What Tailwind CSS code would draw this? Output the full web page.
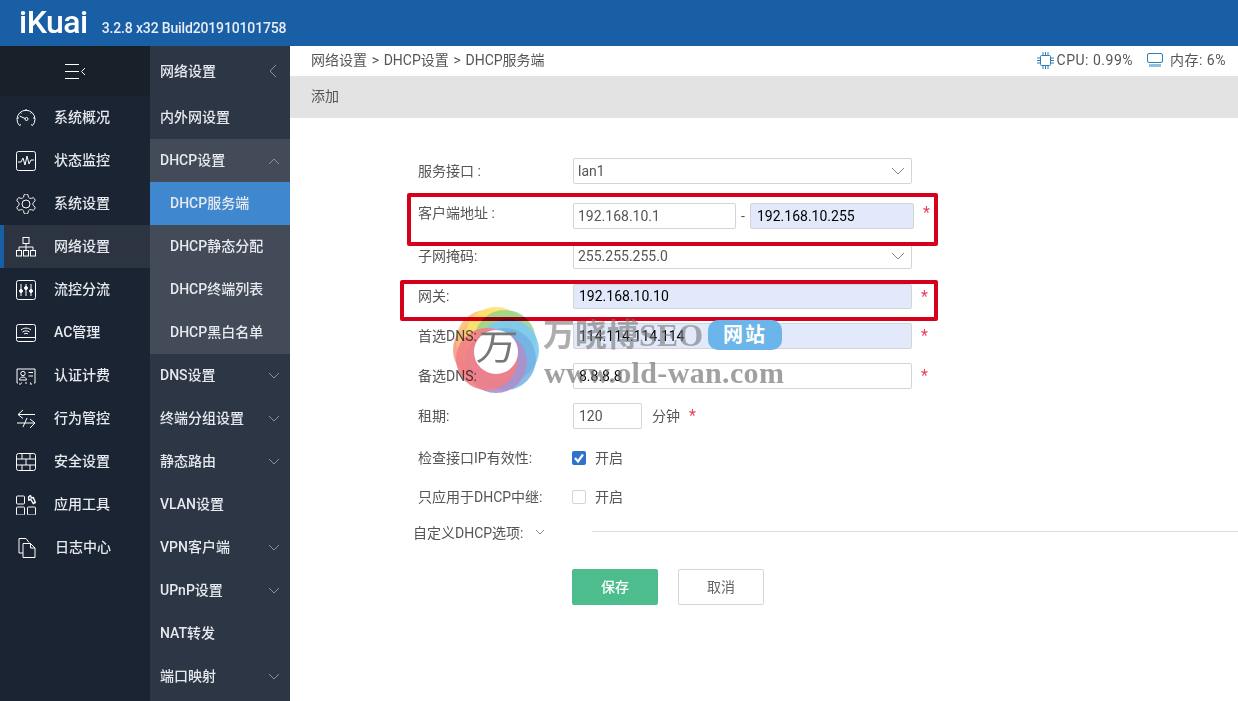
<!DOCTYPE html>
<html lang="zh-CN">
<head>
    <meta charset="UTF-8">
    <title>iKuai - DHCP服务端</title>
    <script src="https://cdn.jsdelivr.net/npm/@tailwindcss/browser@4"></script>
</head>
<body class="h-[701px] w-[1238px] overflow-hidden bg-white font-['Roboto','Noto_Sans_CJK_SC',sans-serif] text-[14px] text-[#555]">
    <!-- top bar -->
    <header class="flex h-[46px] items-center bg-[#195fa6] pl-[19px] text-white">
        <span class="mb-[3px] text-[32px] font-medium leading-none tracking-[-0.5px]">iKuai</span>
        <span class="ml-[14px] mt-[9px] text-[14px] font-medium leading-none tracking-[-0.15px] text-[#e8eef6]">3.2.8 x32 Build201910101758</span>
    </header>

    <div class="flex h-[655px]">
        <!-- main nav -->
        <nav class="w-[150px] shrink-0 bg-[#1b2433] font-medium text-[#e6e9ee]">
            <div class="flex h-[50px] items-center justify-center bg-[#182029]">
                <svg width="24" height="20" viewBox="0 0 24 20" fill="none" stroke="#fff" stroke-width="1"><path d="M2 3.500h14M2 10.500h14M2 17.500h14M22 7l-3.500 3.500L22 14"/></svg>
            </div>
            <a class="flex h-[43px] items-center pl-[16px]">
                <svg class="mr-[18px] w-[20px]" width="20" height="20" viewBox="0 0 20 20" fill="none" stroke="#fff" stroke-width="1"><path d="M3.500 17.500a9 9 0 1 1 13 0M3.500 17.500l1.500-1M16.500 17.500l-1.500-1M1 10h2M17 10h2M10 1v2M4 4l1.500 1.500M16 4l-1.500 1.500M3.500 8l5.500 2.500"/><circle cx="10.500" cy="11" r="1.500"/></svg>
                系统概况
            </a>
            <a class="flex h-[43px] items-center pl-[16px]">
                <svg class="mr-[18px] w-[20px]" width="20" height="20" viewBox="0 0 20 20" fill="none" stroke="#fff" stroke-width="1"><rect x="0.500" y="0.500" width="19" height="19" rx="2"/><path d="M2 11h3l2-4 2 7 2-9 2 8 2-4h3"/></svg>
                状态监控
            </a>
            <a class="flex h-[43px] items-center pl-[16px]">
                <svg class="mr-[18px] w-[20px]" width="20" height="20" viewBox="2 2 20 20" fill="none" stroke="#fff" stroke-width="1"><path d="M12.220 2h-.44a2 2 0 0 0-2 2v.18a2 2 0 0 1-1 1.730l-.43.25a2 2 0 0 1-2 0l-.15-.08a2 2 0 0 0-2.730.73l-.22.38a2 2 0 0 0 .73 2.730l.15.1a2 2 0 0 1 1 1.720v.51a2 2 0 0 1-1 1.740l-.15.09a2 2 0 0 0-.73 2.730l.22.38a2 2 0 0 0 2.730.73l.15-.08a2 2 0 0 1 2 0l.43.25a2 2 0 0 1 1 1.730V20a2 2 0 0 0 2 2h.44a2 2 0 0 0 2-2v-.18a2 2 0 0 1 1-1.730l.43-.25a2 2 0 0 1 2 0l.15.08a2 2 0 0 0 2.730-.73l.22-.39a2 2 0 0 0-.73-2.730l-.15-.08a2 2 0 0 1-1-1.740v-.5a2 2 0 0 1 1-1.740l.15-.09a2 2 0 0 0 .73-2.730l-.22-.38a2 2 0 0 0-2.730-.73l-.15.08a2 2 0 0 1-2 0l-.43-.25a2 2 0 0 1-1-1.730V4a2 2 0 0 0-2-2z"/><circle cx="12" cy="12" r="4"/></svg>
                系统设置
            </a>
            <a class="flex h-[43px] items-center border-l-[4px] border-[#195fa6] bg-[#2c3442] pl-[12px]">
                <svg class="mr-[18px] w-[20px]" width="20" height="20" viewBox="0 0 20 20" fill="none" stroke="#fff" stroke-width="1"><rect x="7" y="0.500" width="6" height="6"/><rect x="0.500" y="13.500" width="5" height="5.500"/><rect x="7.500" y="13.500" width="5" height="5.500"/><rect x="14.500" y="13.500" width="5" height="5.500"/><path d="M10 6.500v7M3 13.500V10h14v3.500"/></svg>
                网络设置
            </a>
            <a class="flex h-[43px] items-center pl-[16px]">
                <svg class="mr-[18px] w-[20px]" width="20" height="20" viewBox="0 0 20 20" fill="none" stroke="#fff" stroke-width="1"><rect x="0.500" y="0.500" width="19" height="19" rx="2"/><path d="M5 4v12M10 4v12M15 4v12"/><circle cx="5" cy="11" r="1.500" fill="#fff"/><circle cx="10" cy="8" r="1.500" fill="#fff"/><circle cx="15" cy="11" r="1.500" fill="#fff"/></svg>
                流控分流
            </a>
            <a class="flex h-[43px] items-center pl-[16px]">
                <svg class="mr-[18px] w-[20px]" width="20" height="20" viewBox="0 0 20 20" fill="none" stroke="#fff" stroke-width="1"><path d="M2.500 1.500h15a2 2 0 0 1 2 2v13a2 2 0 0 1-2 2h-15a2 2 0 0 1-2-2v-13a2 2 0 0 1 2-2zM.500 14.500h19M5 7c3-2.500 7-2.500 10 0M6.500 9c2-1.500 5-1.500 7 0M8 11c1-.8 3-.8 4 0"/></svg>
                AC管理
            </a>
            <a class="flex h-[43px] items-center pl-[16px]">
                <svg class="mr-[18px] w-[20px]" width="20" height="20" viewBox="0 0 20 20" fill="none" stroke="#fff" stroke-width="1"><path d="M1 17V3h18v14h-1M1 17h1M5 17h1M9 17h2M14 17h1M4 17v2M15 17v2"/><circle cx="7" cy="7.500" r="2.200"/><path d="M3.500 14c0-4 7-4 7 0zM12.500 6.500h4.500M12.500 10h4.500"/></svg>
                认证计费
            </a>
            <a class="flex h-[43px] items-center pl-[16px]">
                <svg class="mr-[18px] w-[20px]" width="20" height="20" viewBox="0 0 20 20" fill="none" stroke="#fff" stroke-width="1"><path d="M19 5.500H2M7 1L2 5.500 7 9.500M1 14h18M14 10l5 4-5 5M11 9l-4 9"/></svg>
                行为管控
            </a>
            <a class="flex h-[43px] items-center pl-[16px]">
                <svg class="mr-[18px] w-[20px]" width="20" height="20" viewBox="0 0 20 20" fill="none" stroke="#fff" stroke-width="1"><rect x="0.500" y="1.500" width="19" height="17" rx="2"/><path d="M.500 7h19M.500 13h19M6 1.500V7M14 1.500V7M10 7v6M6 13v5.500M14 13v5.500"/></svg>
                安全设置
            </a>
            <a class="flex h-[43px] items-center pl-[16px]">
                <svg class="mr-[18px] w-[20px]" width="20" height="20" viewBox="0 0 20 20" fill="none" stroke="#fff" stroke-width="1"><rect x="0.500" y="1" width="8" height="8" rx="1"/><rect x="0.500" y="12" width="8" height="8" rx="1"/><rect x="11.500" y="12" width="8" height="8" rx="1"/><path d="M12.500 2l2-1.500 .8 2.500 2-.500 2 5-2 1-2.500-4-2 .5z" stroke-width="1.400"/></svg>
                应用工具
            </a>
            <a class="flex h-[43px] items-center pl-[18px]">
                <svg class="mr-[17px] w-[20px]" width="20" height="20" viewBox="0 0 20 20" fill="none" stroke="#fff" stroke-width="1"><path d="M5 15H1V.500h7l3 4M5 5.500v14h12V10l-4.500-4.500H5M12.500 5.500V10H17"/></svg>
                日志中心
            </a>
        </nav>

        <!-- sub nav -->
        <nav class="w-[140px] shrink-0 overflow-hidden bg-[#2c3645] font-medium text-[#e6e9ee]">
            <a class="flex h-[50px] items-center justify-between pl-[10px] pr-[12px]">网络设置
                <svg width="10" height="14" viewBox="0 0 10 14" fill="none" stroke="#8a93a0"><path d="M8 1L2 7l6 6"/></svg>
            </a>
            <a class="flex h-[43px] items-center pl-[10px]">内外网设置</a>
            <div class="bg-[#434a58]">
                <a class="flex h-[43px] items-center justify-between pl-[10px] pr-[10px]">DHCP设置
                    <svg width="12" height="8" viewBox="0 0 12 8" fill="none" stroke="#8a93a0"><path d="M1 7l5-5 5 5"/></svg>
                </a>
                <a class="flex h-[43px] items-center bg-[#3f87cf] pl-[20px]">DHCP服务端</a>
                <a class="flex h-[43px] items-center pl-[20px]">DHCP静态分配</a>
                <a class="flex h-[43px] items-center pl-[20px]">DHCP终端列表</a>
                <a class="flex h-[43px] items-center pl-[20px]">DHCP黑白名单</a>
            </div>
            <a class="flex h-[43px] items-center justify-between pl-[10px] pr-[10px]">DNS设置
                <svg width="12" height="8" viewBox="0 0 12 8" fill="none" stroke="#8a93a0"><path d="M1 1l5 5 5-5"/></svg>
            </a>
            <a class="flex h-[43px] items-center justify-between pl-[10px] pr-[10px]">终端分组设置
                <svg width="12" height="8" viewBox="0 0 12 8" fill="none" stroke="#8a93a0"><path d="M1 1l5 5 5-5"/></svg>
            </a>
            <a class="flex h-[43px] items-center justify-between pl-[10px] pr-[10px]">静态路由
                <svg width="12" height="8" viewBox="0 0 12 8" fill="none" stroke="#8a93a0"><path d="M1 1l5 5 5-5"/></svg>
            </a>
            <a class="flex h-[43px] items-center pl-[10px]">VLAN设置</a>
            <a class="flex h-[43px] items-center justify-between pl-[10px] pr-[10px]">VPN客户端
                <svg width="12" height="8" viewBox="0 0 12 8" fill="none" stroke="#8a93a0"><path d="M1 1l5 5 5-5"/></svg>
            </a>
            <a class="flex h-[43px] items-center justify-between pl-[10px] pr-[10px]">UPnP设置
                <svg width="12" height="8" viewBox="0 0 12 8" fill="none" stroke="#8a93a0"><path d="M1 1l5 5 5-5"/></svg>
            </a>
            <a class="flex h-[43px] items-center pl-[10px]">NAT转发</a>
            <a class="flex h-[43px] items-center justify-between pl-[10px] pr-[10px]">端口映射
                <svg width="12" height="8" viewBox="0 0 12 8" fill="none" stroke="#8a93a0"><path d="M1 1l5 5 5-5"/></svg>
            </a>
        </nav>

        <!-- content -->
        <main class="relative flex-1">
            <div class="flex h-[28px] items-center justify-between pl-[21px] pr-[12px]">
                <div class="[word-spacing:1.200px]">网络设置 &gt; DHCP设置 &gt; DHCP服务端</div>
                <div class="flex items-center tracking-[0.5px]">
                    <svg class="mr-[3px]" width="17" height="17" viewBox="0 0 17 17" fill="none" stroke="#2b7fb8"><rect x="3.500" y="3.500" width="10" height="10" rx="1"/><path d="M6 0v3M8.500 0v3M11 0v3M6 14v3M8.500 14v3M11 14v3M0 6h3M0 8.500h3M0 11h3M14 6h3M14 8.500h3M14 11h3"/></svg>
                    <span>CPU: 0.99%</span>
                    <svg class="ml-[14px] mr-[7px]" width="16" height="14" viewBox="0 0 16 14" fill="none" stroke="#2b7fb8"><rect x="0.500" y="0.500" width="15" height="9" rx="1.500"/><path d="M3 11v3M5 11v3M7 11v3M9 11v3M11 11v3M13 11v3"/></svg>
                    <span>内存: 6%</span>
                </div>
            </div>
            <div class="mt-[2px] flex h-[42px] items-center bg-[#e3e3e3] pb-[2px] pl-[21px]">添加</div>

            <form class="pl-[128px]">
                <div class="mt-[40px] flex h-[26px] items-center">
                    <label class="w-[155px]">服务接口 :</label>
                    <div class="flex h-full w-[339px] items-center justify-between rounded-[2px] border border-[#d5d5d5] pl-[4px] pr-[6px]">lan1
                        <svg width="14" height="8" viewBox="0 0 14 8" fill="none" stroke="#888"><path d="M1 1l6 6 6-6"/></svg>
                    </div>
                </div>
                <div class="mt-[19px] flex h-[26px] items-center">
                    <label class="mb-[6px] w-[155px]">客户端地址 :</label>
                    <div class="flex h-full w-[163px] items-center rounded-[2px] border border-[#d5d5d5] pl-[4px]">192.168.10.1</div>
                    <span class="w-[14px] text-center">-</span>
                    <div class="flex h-full w-[164px] items-center rounded-[2px] border border-[#d5d5d5] bg-[#e2e9fb] pl-[6px] text-black">192.168.10.255</div>
                    <span class="mb-[6px] ml-[9px] text-[16px] leading-none text-[#e8425f]">*</span>
                </div>
                <div class="mt-[14px] flex h-[26px] items-center">
                    <label class="w-[155px]">子网掩码:</label>
                    <div class="flex h-full w-[339px] items-center justify-between rounded-[2px] border border-[#d5d5d5] pl-[4px] pr-[6px]">255.255.255.0
                        <svg width="14" height="8" viewBox="0 0 14 8" fill="none" stroke="#888"><path d="M1 1l6 6 6-6"/></svg>
                    </div>
                </div>
                <div class="mt-[15px] flex h-[25px] items-center">
                    <label class="w-[155px]">网关:</label>
                    <div class="flex h-full w-[339px] items-center rounded-[2px] border border-[#d5d5d5] bg-[#e2e9fb] pl-[5px] text-black">192.168.10.10</div>
                    <span class="ml-[9px] text-[16px] leading-none text-[#e8425f]">*</span>
                </div>
                <div class="mt-[14px] flex h-[26px] items-center">
                    <label class="w-[155px]">首选DNS:</label>
                    <div class="flex h-full w-[339px] items-center rounded-[2px] border border-[#d5d5d5] bg-[#e2e9fb] pl-[5px] text-black">114.114.114.114</div>
                    <span class="ml-[9px] text-[16px] leading-none text-[#e8425f]">*</span>
                </div>
                <div class="mt-[14px] flex h-[26px] items-center">
                    <label class="w-[155px]">备选DNS:</label>
                    <div class="flex h-full w-[339px] items-center rounded-[2px] border border-[#d5d5d5] pl-[5px] text-black">8.8.8.8</div>
                    <span class="ml-[9px] text-[16px] leading-none text-[#e8425f]">*</span>
                </div>
                <div class="mt-[14px] flex h-[26px] items-center">
                    <label class="w-[155px]">租期:</label>
                    <div class="flex h-full w-[69px] items-center rounded-[2px] border border-[#d5d5d5] pl-[5px]">120</div>
                    <span class="ml-[10px]">分钟</span>
                    <span class="ml-[9px] text-[16px] leading-none text-[#e8425f]">*</span>
                </div>
                <div class="mt-[16px] flex h-[26px] items-center">
                    <label class="w-[154px]">检查接口IP有效性:</label>
                    <svg width="14" height="14" viewBox="0 0 14 14"><rect width="14" height="14" rx="2" fill="#2f71cd"/><path d="M3 7l3 3.500 5-7" fill="none" stroke="#fff" stroke-width="2.200"/></svg>
                    <span class="ml-[9px]">开启</span>
                </div>
                <div class="mt-[13px] flex h-[26px] items-center">
                    <label class="w-[154px]">只应用于DHCP中继:</label>
                    <span class="h-[14px] w-[14px] rounded-[2px] border border-[#d5d5d5]"></span>
                    <span class="ml-[9px]">开启</span>
                </div>
                <div class="-ml-[5px] mt-[10px] flex h-[26px] items-center">
                    <label class="w-[122px]">自定义DHCP选项:</label>
                    <svg class="mb-[3px]" width="10" height="6" viewBox="0 0 10 6" fill="none" stroke="#888"><path d="M1 1l4 4 4-4"/></svg>
                    <div class="mb-[3px] ml-[47px] h-px flex-1 bg-[#ddd]"></div>
                </div>
                <div class="ml-[154px] mt-[23px] flex h-[36px]">
                    <button type="button" class="w-[86px] rounded-[2px] bg-[#4dbd8e] font-medium text-white">保存</button>
                    <button type="button" class="ml-[20px] w-[86px] rounded-[2px] border border-[#d5d5d5] text-[#666]">取消</button>
                </div>
            </form>

            <!-- red annotation boxes -->
            <div class="absolute left-[117px] top-[147px] h-[53px] w-[531px] rounded-[2px] border-[4px] border-[#d5001c]"></div>
            <div class="absolute left-[110px] top-[234px] h-[41px] w-[538px] rounded-[2px] border-[4px] border-[#d5001c]"></div>

            <!-- watermark -->
            <svg class="pointer-events-none absolute left-[163px] top-[261px] mix-blend-multiply" width="86" height="86" viewBox="-43 -43 86 86">
                <circle cx="-12" cy="0" r="31" fill="#f59a8a" opacity="0.9"/>
                <circle cx="-9" cy="-9" r="31" fill="#f8c27a" opacity="0.9"/>
                <circle cx="0" cy="-12" r="31" fill="#fde36e" opacity="0.9"/>
                <circle cx="9" cy="-9" r="31" fill="#96d28c" opacity="0.85"/>
                <circle cx="12" cy="0" r="31" fill="#7ccaf2" opacity="0.9"/>
                <circle cx="9" cy="9" r="31" fill="#72b2e2" opacity="0.85"/>
                <circle cx="0" cy="12" r="31" fill="#ae8fcb" opacity="0.9"/>
                <circle cx="-9" cy="9" r="31" fill="#f17f86" opacity="0.9"/>
                <circle cx="0" cy="2" r="22" fill="#fff"/>
            </svg>
            <div class="pointer-events-none absolute left-[189px] top-[284px] -skew-x-6 scale-x-110 text-[36px] leading-none text-[#777]">万</div>
            <div class="pointer-events-none absolute left-[253px] top-[272px] flex h-[34px] items-center font-['Liberation_Serif','Noto_Sans_CJK_SC',serif] text-[32px] font-bold leading-none text-[#777]/60">万晓博SEO</div>
            <div class="pointer-events-none absolute left-[418px] top-[274px] flex h-[30px] w-[74px] items-center justify-center rounded-[10px] bg-[#6bb5ea] text-[20px] font-bold tracking-[2px] text-white">网站</div>
            <div class="pointer-events-none absolute left-[254px] top-[311px] font-['Liberation_Serif',serif] text-[30px] font-bold leading-[32px] tracking-[0.35px] text-[#777]/70">www.old-wan.com</div>
        </main>
    </div>
</body>
</html>
